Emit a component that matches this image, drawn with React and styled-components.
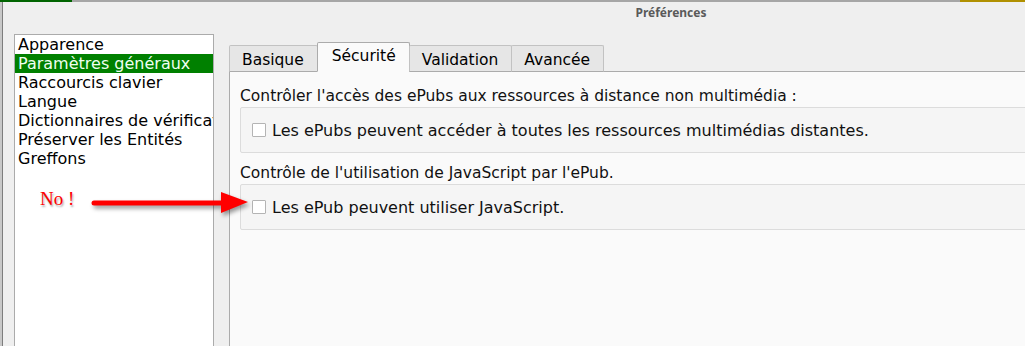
import React from 'react';
import styled, { createGlobalStyle } from 'styled-components';

const GlobalStyle = createGlobalStyle`
  html, body {
    margin: 0;
    padding: 0;
    width: 1025px;
    height: 346px;
    overflow: hidden;
    background: #c8c8c8;
  }
  #root {
    height: 346px;
  }
`;

const sections = ['Apparence', 'Paramètres généraux', 'Raccourcis clavier', 'Langue', 'Dictionnaires de vérification', 'Préserver les Entités', 'Greffons'];
const tabs = ['Basique', 'Sécurité', 'Validation', 'Avancée'];

const App = () => {
  return (
    <Desktop>
      <GlobalStyle />
      <BackStrip>
        <StripPart $w='72px' $bg='#006400' />
        <StripPart $w='888px' $bg='#a6a6a6' />
        <StripPart $w='65px' $bg='#b09000' />
      </BackStrip>
      <Window>
        <TitleBar>Préférences</TitleBar>
        <Body>
          <SectionList>
            {sections.map((s, i) => (
              <SectionItem key={s} $selected={i === 1}>{s}</SectionItem>
            ))}
          </SectionList>
          <TabWidget>
            <TabBar>
              {tabs.map((t, i) => (
                <Tab key={t} $active={i === 1}>{t}</Tab>
              ))}
            </TabBar>
            <Pane>
              <GroupLabel>Contrôler l'accès des ePubs aux ressources à distance non multimédia :</GroupLabel>
              <GroupBox>
                <CheckRow>
                  <CheckBox />
                  Les ePubs peuvent accéder à toutes les ressources multimédias distantes.
                </CheckRow>
              </GroupBox>
              <GroupLabel $gap>Contrôle de l'utilisation de JavaScript par l'ePub.</GroupLabel>
              <GroupBox>
                <CheckRow>
                  <CheckBox />
                  Les ePub peuvent utiliser JavaScript.
                </CheckRow>
              </GroupBox>
            </Pane>
          </TabWidget>
        </Body>
        <Note>No !</Note>
        <Arrow width='175' height='40' viewBox='0 0 175 40'>
          <line x1='8' y1='16' x2='140' y2='16' stroke='#f00' strokeWidth='5' strokeLinecap='round' />
          <polygon points='135,5 162,15 135,26' fill='#f00' />
        </Arrow>
      </Window>
    </Desktop>
  );
};

export default App;

const Desktop = styled.div`
  display: flex;
  flex-direction: column;
  height: 346px;
  font-family: 'DejaVu Sans', sans-serif;
`;

const BackStrip = styled.div`
  display: flex;
  height: 2px;
  flex-shrink: 0;
`;

const StripPart = styled.div`
  width: ${p => p.$w};
  background: ${p => p.$bg};
`;

const Window = styled.div`
  position: relative;
  flex: 1;
  margin-left: 2px;
  border-left: 1px solid #7d7d7d;
  background: #efefef;
  display: flex;
  flex-direction: column;
  overflow: hidden;
`;

const TitleBar = styled.div`
  height: 22px;
  line-height: 22px;
  padding-left: 314px;
  text-align: center;
  font-family: 'Noto Sans', sans-serif;
  font-weight: bold;
  font-size: 12px;
  color: #5a5a5a;
`;

const Body = styled.div`
  flex: 1;
  display: grid;
  grid-template-columns: 200px 1fr;
  column-gap: 15px;
  padding: 10px 0 0 11px;
  margin-right: -30px;
`;

const SectionList = styled.div`
  background: #fff;
  border: 1px solid #ababab;
  overflow: hidden;
  margin-bottom: -10px;
`;

const SectionItem = styled.div`
  height: 19px;
  line-height: 19px;
  padding-left: 3px;
  font-size: 16px;
  white-space: nowrap;
  color: ${p => (p.$selected ? '#f0fff0' : '#000')};
  background: ${p => (p.$selected ? '#008000' : 'transparent')};
`;

const TabWidget = styled.div`
  display: flex;
  flex-direction: column;
  padding-top: 9px;
`;

const TabBar = styled.div`
  display: flex;
  align-items: flex-end;
  height: 29px;
  margin-bottom: -1px;
  position: relative;
  z-index: 1;
`;

const Tab = styled.div`
  box-sizing: border-box;
  height: ${p => (p.$active ? '30px' : '27px')};
  padding: ${p => (p.$active ? '2px 13px 0 14px' : '3px 13px 0 12px')};
  font-size: 15.5px;
  line-height: 22px;
  color: #000;
  background: ${p => (p.$active ? '#fafafa' : '#e6e6e6')};
  border: 1px solid ${p => (p.$active ? '#ababab' : '#c2c2c2')};
  border-bottom: ${p => (p.$active ? '1px solid #fafafa' : '1px solid #ababab')};
  border-radius: 2px 2px 0 0;
  margin-right: -1px;
`;

const Pane = styled.div`
  flex: 1;
  background: #fafafa;
  border: 1px solid #ababab;
  border-right: none;
  border-bottom: none;
  padding: 14px 0 0 10px;
`;

const GroupLabel = styled.div`
  font-size: 15.5px;
  line-height: 20px;
  color: #111;
  margin-top: ${p => (p.$gap ? '10px' : '0')};
  margin-bottom: 1px;
`;

const GroupBox = styled.div`
  height: 44px;
  background: #f5f5f5;
  border: 1px solid #dcdcdc;
  border-radius: 2px;
  display: flex;
  align-items: center;
  padding-left: 11px;
`;

const CheckRow = styled.label`
  display: flex;
  align-items: center;
  gap: 6px;
  font-size: 16px;
  color: #111;
`;

const CheckBox = styled.span`
  box-sizing: border-box;
  width: 14px;
  height: 14px;
  background: #fff;
  border: 1px solid #b4b4b4;
  border-radius: 1px;
`;

const Note = styled.div`
  position: absolute;
  left: 37px;
  top: 186px;
  font-family: 'Liberation Serif', serif;
  font-size: 19px;
  color: #f00;
  text-shadow: 1px 2px 2px rgba(0, 0, 0, 0.35);
`;

const Arrow = styled.svg`
  position: absolute;
  left: 83px;
  top: 185px;
  filter: drop-shadow(2px 3px 2px rgba(0, 0, 0, 0.4));
`;
